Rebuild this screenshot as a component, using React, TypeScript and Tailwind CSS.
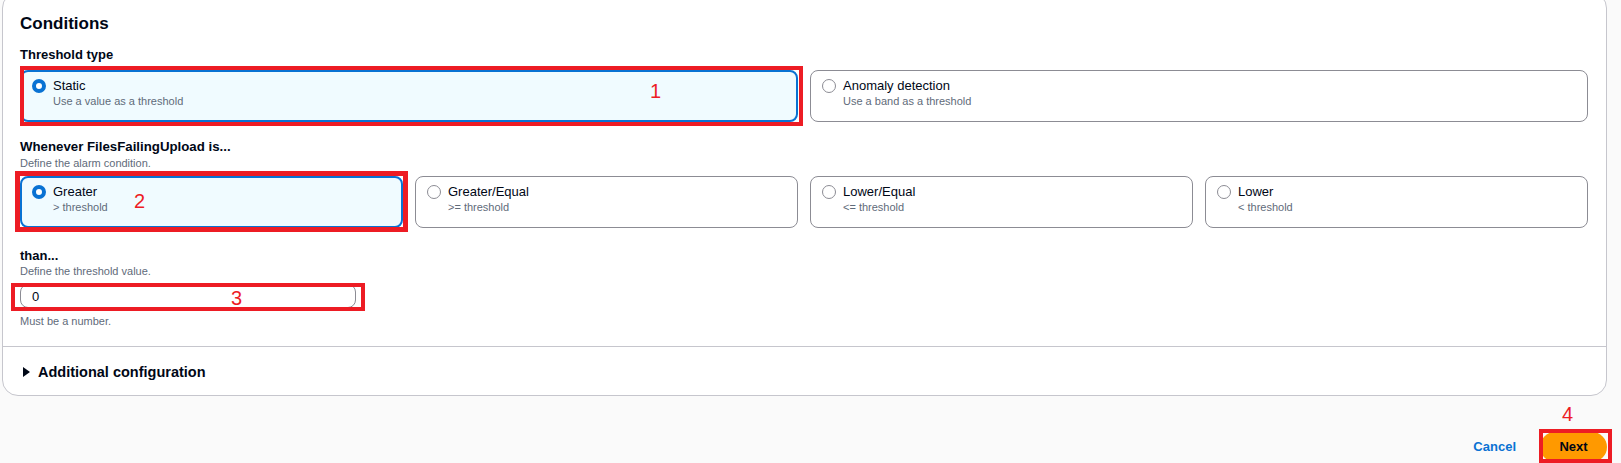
import React from "react";

const FONT = { fontFamily: '"Liberation Sans", Arial, sans-serif' };

function Radio({ checked }: { checked: boolean }) {
  return checked ? (
    <span className="mt-[1px] block h-[14px] w-[14px] shrink-0 rounded-full border-[4.5px] border-[#0972d3] bg-white" />
  ) : (
    <span className="mt-[1px] block h-[14px] w-[14px] shrink-0 rounded-full border-[1.5px] border-[#8c8c94] bg-white" />
  );
}

function Tile({ title, desc, checked }: { title: string; desc: string; checked: boolean }) {
  const cls = checked
    ? "flex h-[52px] items-start gap-[7px] rounded-[8px] border-2 border-[#0972d3] bg-[#f0fbff] pl-[10px] pt-[6px]"
    : "flex h-[52px] items-start gap-[7px] rounded-[8px] border border-[#8c8c94] bg-white pl-[11px] pt-[7px]";
  return (
    <div className={cls}>
      <Radio checked={checked} />
      <div className="flex flex-col">
        <span className="text-[13px] leading-[16px] text-[#000716]">{title}</span>
        <span className="text-[11px] leading-[14px] text-[#5f6b7a]">{desc}</span>
      </div>
    </div>
  );
}

export default function App() {
  return (
    <div className="min-h-[463px] overflow-hidden bg-[#fafafa] pl-[2px] pr-[14px]" style={FONT}>
      <div className="-mt-[8px] rounded-[16px] border border-[#c6c6cd] bg-white">
        <div className="border-b border-[#c6c6cd] pb-[18px] pl-[17px] pr-[18px] pt-[20px]">
          <h2 className="text-[17px] font-bold leading-[22px] text-[#000716]">Conditions</h2>

          <div className="mt-[11px] text-[13px] font-bold leading-[18px] text-[#000716]">Threshold type</div>
          <div className="mt-[6px] grid grid-cols-2 gap-[12px]">
            <div className="relative">
              <Tile title="Static" desc="Use a value as a threshold" checked />
              <div className="pointer-events-none absolute -bottom-[4px] -right-[5px] -top-[4px] left-0 border-[4px] border-[#ed1c24]" />
              <span className="absolute left-[630px] top-[9px] text-[20px] leading-[24px] text-[#ed1c24]">1</span>
            </div>
            <Tile title="Anomaly detection" desc="Use a band as a threshold" checked={false} />
          </div>

          <div className="mt-[17px] text-[13.25px] font-bold leading-[16px] text-[#000716]">
            Whenever FilesFailingUpload is...
          </div>
          <div className="text-[11px] leading-[16px] text-[#5f6b7a]">Define the alarm condition.</div>
          <div className="mt-[5px] grid grid-cols-4 gap-[12px]">
            <div className="relative">
              <Tile title="Greater" desc="> threshold" checked />
              <div className="pointer-events-none absolute -bottom-[4px] -left-[5px] -right-[5px] -top-[5px] border-[5px] border-[#ed1c24]" />
              <span className="absolute left-[114px] top-[13px] text-[20px] leading-[24px] text-[#ed1c24]">2</span>
            </div>
            <Tile title="Greater/Equal" desc=">= threshold" checked={false} />
            <Tile title="Lower/Equal" desc="<= threshold" checked={false} />
            <Tile title="Lower" desc="< threshold" checked={false} />
          </div>

          <div className="mt-[20px] text-[13px] font-bold leading-[16px] text-[#000716]">than...</div>
          <div className="text-[11px] leading-[14px] text-[#5f6b7a]">Define the threshold value.</div>
          <div className="relative mt-[6px] w-[336px]">
            <input
              readOnly
              value="0"
              className="block h-[24px] w-full rounded-[8px] border border-[#8c8c94] bg-white pl-[11px] text-[13px] text-[#000716] outline-none"
              style={FONT}
            />
            <div className="pointer-events-none absolute -bottom-[3px] -left-[9px] -right-[9px] -top-[1px] border-[4px] border-[#ed1c24]" />
            <span className="absolute left-[211px] top-[2px] text-[20px] leading-[24px] text-[#ed1c24]">3</span>
          </div>
          <div className="mt-[6px] text-[11px] leading-[14px] text-[#5f6b7a]">Must be a number.</div>
        </div>

        <div className="flex items-center gap-[8px] pb-[13px] pl-[20px] pt-[15px]">
          <svg width="7" height="10" viewBox="0 0 7 10" className="shrink-0">
            <path d="M0 0 L7 5 L0 10 Z" fill="#000716" />
          </svg>
          <span className="text-[14.5px] font-bold leading-[20px] text-[#000716]">Additional configuration</span>
        </div>
      </div>

      <div className="mt-[36px] flex items-center justify-end gap-[24px]">
        <span className="text-[13px] font-bold leading-[16px] text-[#0972d3]">Cancel</span>
        <div className="relative">
          <div className="flex h-[30px] w-[67px] items-center justify-center rounded-full bg-[#ff9900] text-[13px] font-bold text-[#000716]">
            Next
          </div>
          <div className="pointer-events-none absolute -bottom-[1px] -left-[1px] -right-[5px] -top-[3px] border-[4px] border-[#ed1c24]" />
          <span className="absolute left-[22px] -top-[30px] text-[20px] leading-[24px] text-[#ed1c24]">4</span>
        </div>
      </div>
    </div>
  );
}
